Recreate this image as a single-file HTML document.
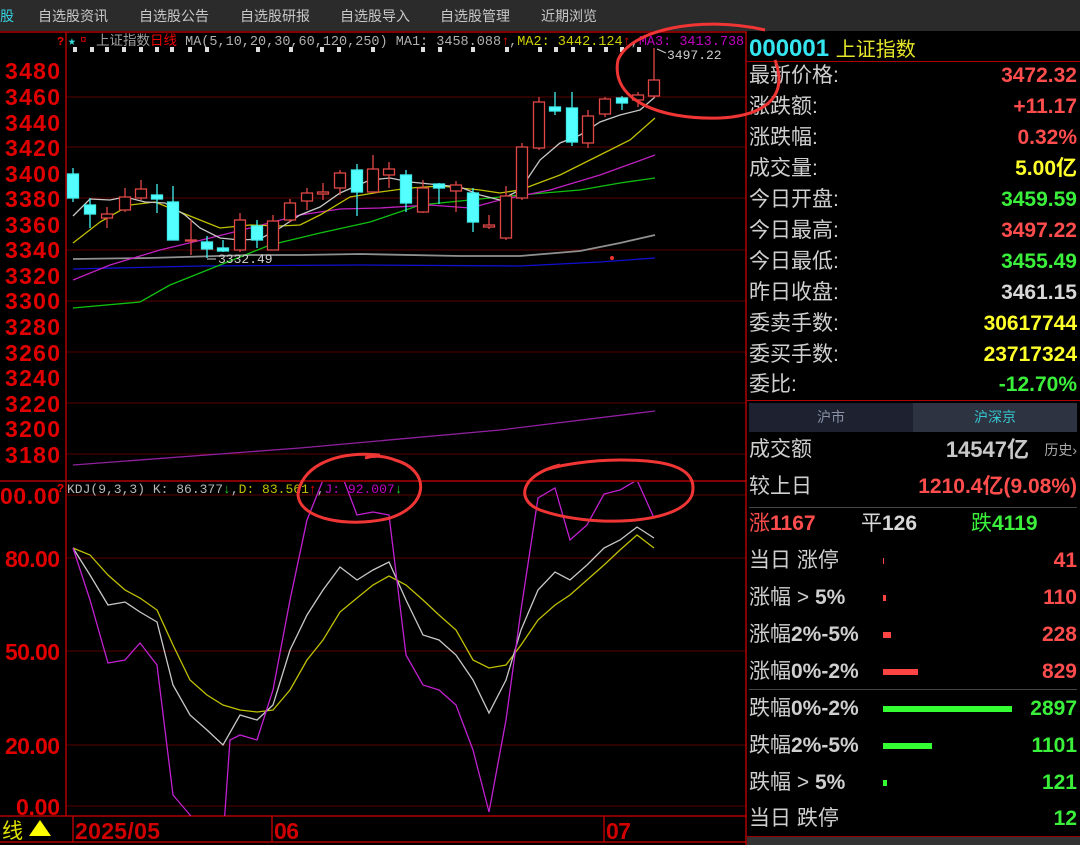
<!DOCTYPE html>
<html><head><meta charset="utf-8"><style>
html,body{margin:0;padding:0;background:#000;width:1080px;height:845px;overflow:hidden;font-family:"Liberation Sans","Noto Sans CJK SC",sans-serif}
#top{position:absolute;left:0;top:0;width:1080px;height:31px;background:#2b2b2b;color:#c8c8c8;font-size:14px}
#top span{position:absolute;top:6px}
#rp{position:absolute;left:747px;top:31px;width:333px;height:814px;background:#000;color:#cfcfcf}
.r{position:absolute;left:2px;width:328px;height:30px;font-size:21px;line-height:30px}
.r .v{position:absolute;right:0;top:0;font-weight:bold;font-size:21px}
.red{color:#ff4d4d}.grn{color:#3bf03b}.yel{color:#ffff2a}.wht{color:#d8d8d8}
.bar{position:absolute;left:134px;height:6px;top:12px}
</style></head><body>
<div id="top">
<span style="left:0;color:#35d0e0">股</span>
<span style="left:38px">自选股资讯</span>
<span style="left:139px">自选股公告</span>
<span style="left:240px">自选股研报</span>
<span style="left:340px">自选股导入</span>
<span style="left:440px">自选股管理</span>
<span style="left:541px">近期浏览</span>
</div>
<svg style="position:absolute;left:0;top:0" width="747" height="845" font-family="Liberation Mono, monospace">
<g stroke="#5a0000" stroke-width="1">
<line x1="66" y1="97" x2="747" y2="97"/><line x1="66" y1="147" x2="747" y2="147"/><line x1="66" y1="198" x2="747" y2="198"/><line x1="66" y1="250" x2="747" y2="250"/><line x1="66" y1="301" x2="747" y2="301"/><line x1="66" y1="352" x2="747" y2="352"/><line x1="66" y1="403" x2="747" y2="403"/><line x1="66" y1="454" x2="747" y2="454"/>
<line x1="66" y1="495" x2="747" y2="495"/><line x1="66" y1="558" x2="747" y2="558"/><line x1="66" y1="651" x2="747" y2="651"/><line x1="66" y1="745" x2="747" y2="745"/><line x1="66" y1="806" x2="747" y2="806"/>
</g>
<g stroke="#b00000" stroke-width="1.5">
<line x1="0" y1="32" x2="747" y2="32"/>
<line x1="66" y1="32" x2="66" y2="816"/>
<line x1="0" y1="481" x2="747" y2="481"/>
<line x1="0" y1="816" x2="747" y2="816"/><line x1="0" y1="842" x2="747" y2="842"/>
<line x1="746" y1="32" x2="746" y2="845"/>
<line x1="73" y1="816" x2="73" y2="842"/><line x1="272" y1="816" x2="272" y2="842"/><line x1="604" y1="816" x2="604" y2="842"/>
</g>
<g fill="#e00000" font-family="Liberation Sans, sans-serif" font-size="23" font-weight="bold" lengthAdjust="spacingAndGlyphs">
<text x="5" y="79" textLength="55">3480</text><text x="5" y="105" textLength="55">3460</text><text x="5" y="131" textLength="55">3440</text><text x="5" y="156" textLength="55">3420</text><text x="5" y="182" textLength="55">3400</text><text x="5" y="207" textLength="55">3380</text><text x="5" y="233" textLength="55">3360</text><text x="5" y="258" textLength="55">3340</text><text x="5" y="284" textLength="55">3320</text><text x="5" y="309" textLength="55">3300</text><text x="5" y="335" textLength="55">3280</text><text x="5" y="361" textLength="55">3260</text><text x="5" y="386" textLength="55">3240</text><text x="5" y="412" textLength="55">3220</text><text x="5" y="437" textLength="55">3200</text><text x="5" y="463" textLength="55">3180</text>
<text x="0" y="504" textLength="60">00.00</text><text x="5" y="567" textLength="55">80.00</text><text x="5" y="660" textLength="55">50.00</text><text x="5" y="754" textLength="55">20.00</text><text x="16" y="815" textLength="44">0.00</text>
</g>
<text x="57" y="45" fill="#e00" font-size="12" font-weight="bold">?</text>
<text x="68" y="45" fill="#35e0e0" font-size="13">★</text>
<text x="80" y="43" fill="#e00" font-size="11">¤</text>
<text x="96" y="45" font-size="13.5" font-family="Liberation Mono, Noto Sans CJK SC, monospace"><tspan fill="#a0a0a0">上证指数</tspan><tspan fill="#e00">日线</tspan><tspan fill="#b0b0b0"> MA(5,10,20,30,60,120,250) MA1: 3458.088</tspan><tspan fill="#e00">↑</tspan><tspan fill="#b0b0b0">,</tspan><tspan fill="#d0d000">MA2: 3442.124</tspan><tspan fill="#e00">↑</tspan><tspan fill="#b0b0b0">,</tspan><tspan fill="#c000c0">MA3: 3413.738</tspan><tspan fill="#e00">↑</tspan><tspan fill="#b0b0b0">,</tspan><tspan fill="#00c000">MA4</tspan></text>
<g fill="#ddd">
<rect x="73" y="47" width="4" height="5"/><rect x="90" y="47" width="4" height="5"/><rect x="105" y="47" width="4" height="5"/><rect x="122" y="47" width="4" height="5"/><rect x="139" y="47" width="4" height="5"/><rect x="155" y="47" width="4" height="5"/><rect x="170" y="47" width="4" height="5"/><rect x="188" y="47" width="4" height="5"/><rect x="205" y="47" width="4" height="5"/><rect x="256" y="47" width="4" height="5"/><rect x="289" y="47" width="4" height="5"/><rect x="320" y="47" width="4" height="5"/><rect x="337" y="47" width="4" height="5"/><rect x="371" y="47" width="4" height="5"/><rect x="421" y="47" width="4" height="5"/><rect x="438" y="47" width="4" height="5"/><rect x="471" y="47" width="4" height="5"/><rect x="505" y="47" width="4" height="5"/><rect x="538" y="47" width="4" height="5"/><rect x="554" y="47" width="4" height="5"/><rect x="571" y="47" width="4" height="5"/><rect x="588" y="47" width="4" height="5"/><rect x="604" y="47" width="4" height="5"/><rect x="620" y="47" width="4" height="5"/><rect x="637" y="47" width="4" height="5"/>
</g>
<g fill="none" stroke-width="1.3">
<polyline stroke="#9020a0" points="73,465 300,448 500,430 655,411"/>
<polyline stroke="#1010d0" points="73,269 200,266 360,265 520,266 600,262 655,258"/>
<polyline stroke="#909090" stroke-width="1.8" points="73,259 150,258 250,255 300,255 360,254 460,256 520,256 580,251 620,243 655,235"/>
<polyline stroke="#10c010" points="73,308 140,302 170,285 220,265 270,245 320,233 370,222 420,205 470,200 520,195 580,190 620,183 655,178"/>
<polyline stroke="#c020c0" points="73,280 110,265 160,250 210,238 250,228 300,215 340,209 380,208 430,205 470,208 500,200 550,190 600,175 655,155"/>
<polyline stroke="#c0c000" points="73,243 100,222 130,205 155,202 175,210 200,220 220,228 250,225 280,226 300,225 320,215 350,197 380,192 410,188 440,186 480,190 500,193 520,190 560,175 600,155 630,140 655,118"/>
<polyline stroke="#c8c8c8" points="73,216 90,199 110,200 125,197 145,202 165,203 185,215 200,228 220,238 240,240 260,239 280,228 300,215 320,207 340,193 370,180 390,178 410,182 440,185 460,187 480,195 500,200 520,190 540,160 560,143 580,135 600,122 620,115 640,110 655,97"/>
</g>
<g stroke-width="1.3">
<g stroke="#40f0f0" fill="#54ffff">
<line x1="73" y1="168" x2="73" y2="202"/><rect x="67.5" y="174" width="11" height="24"/>
<line x1="90" y1="198" x2="90" y2="228"/><rect x="84.5" y="205" width="11" height="9"/>
<line x1="157" y1="184" x2="157" y2="213"/><rect x="151.5" y="195" width="11" height="4"/>
<line x1="173" y1="186" x2="173" y2="240"/><rect x="167.5" y="202" width="11" height="38"/>
<line x1="207" y1="236" x2="207" y2="258"/><rect x="201.5" y="242" width="11" height="7"/>
<line x1="223" y1="240" x2="223" y2="252"/><rect x="217.5" y="248" width="11" height="3"/>
<line x1="257" y1="220" x2="257" y2="248"/><rect x="251.5" y="226" width="11" height="14"/>
<line x1="357" y1="164" x2="357" y2="216"/><rect x="351.5" y="170" width="11" height="22"/>
<line x1="406" y1="170" x2="406" y2="212"/><rect x="400.5" y="175" width="11" height="28"/>
<line x1="439" y1="183" x2="439" y2="204"/><rect x="433.5" y="184" width="11" height="4"/>
<line x1="473" y1="188" x2="473" y2="232"/><rect x="467.5" y="193" width="11" height="29"/>
<line x1="555" y1="92" x2="555" y2="115"/><rect x="549.5" y="107" width="11" height="4"/>
<line x1="572" y1="92" x2="572" y2="146"/><rect x="566.5" y="108" width="11" height="34"/>
<line x1="622" y1="96" x2="622" y2="110"/><rect x="616.5" y="98" width="11" height="5"/>
</g>
<g stroke="#e04848" fill="none">
<line x1="107" y1="207" x2="107" y2="228"/><rect x="101.5" y="214" width="11" height="4" fill="#000"/>
<line x1="125" y1="188" x2="125" y2="212"/><rect x="119.5" y="197" width="11" height="13" fill="#000"/>
<line x1="141" y1="180" x2="141" y2="200"/><rect x="135.5" y="189" width="11" height="9" fill="#000"/>
<line x1="191" y1="220" x2="191" y2="255"/><rect x="185.5" y="240" width="11" height="1" fill="#000"/>
<line x1="240" y1="213" x2="240" y2="252"/><rect x="234.5" y="220" width="11" height="30" fill="#000"/>
<line x1="273" y1="215" x2="273" y2="250"/><rect x="267.5" y="221" width="11" height="29" fill="#000"/>
<line x1="290" y1="199" x2="290" y2="222"/><rect x="284.5" y="203" width="11" height="17" fill="#000"/>
<line x1="307" y1="188" x2="307" y2="210"/><rect x="301.5" y="193" width="11" height="8" fill="#000"/>
<line x1="323" y1="183" x2="323" y2="200"/><rect x="317.5" y="192" width="11" height="2" fill="#000"/>
<line x1="340" y1="170" x2="340" y2="195"/><rect x="334.5" y="173" width="11" height="15" fill="#000"/>
<line x1="373" y1="155" x2="373" y2="193"/><rect x="367.5" y="169" width="11" height="23" fill="#000"/>
<line x1="389" y1="162" x2="389" y2="188"/><rect x="383.5" y="169" width="11" height="6" fill="#000"/>
<line x1="423" y1="180" x2="423" y2="213"/><rect x="417.5" y="188" width="11" height="24" fill="#000"/>
<line x1="456" y1="181" x2="456" y2="212"/><rect x="450.5" y="185" width="11" height="6" fill="#000"/>
<line x1="489" y1="215" x2="489" y2="229"/><rect x="483.5" y="225" width="11" height="2" fill="#000"/>
<line x1="506" y1="186" x2="506" y2="240"/><rect x="500.5" y="196" width="11" height="42" fill="#000"/>
<line x1="522" y1="143" x2="522" y2="200"/><rect x="516.5" y="147" width="11" height="51" fill="#000"/>
<line x1="539" y1="97" x2="539" y2="150"/><rect x="533.5" y="102" width="11" height="46" fill="#000"/>
<line x1="588" y1="110" x2="588" y2="148"/><rect x="582.5" y="116" width="11" height="27" fill="#000"/>
<line x1="605" y1="97" x2="605" y2="117"/><rect x="599.5" y="99" width="11" height="15" fill="#000"/>
<line x1="638" y1="92" x2="638" y2="107"/><rect x="632.5" y="95" width="11" height="5" fill="#000"/>
<line x1="654" y1="48" x2="654" y2="98"/><rect x="648.5" y="80" width="11" height="16" fill="#000"/>
</g>
</g>
<circle cx="612" cy="258" r="2" fill="#e33"/>
<line x1="657" y1="49" x2="666" y2="53" stroke="#ccc"/>
<text x="667" y="59" fill="#d0d0d0" font-size="13">3497.22</text>
<line x1="207" y1="259" x2="216" y2="259" stroke="#ccc"/>
<text x="218" y="263" fill="#d0d0d0" font-size="13">3332.49</text>
<text x="57" y="492" fill="#e00" font-size="12" font-weight="bold">?</text>
<text x="67" y="493" font-size="13"><tspan fill="#b8b8b8">KDJ(9,3,3) K: 86.377</tspan><tspan fill="#2c2">↓</tspan><tspan fill="#b8b8b8">,</tspan><tspan fill="#c0c000">D: 83.561</tspan><tspan fill="#e00">↑</tspan><tspan fill="#b8b8b8">,</tspan><tspan fill="#c000c0">J: 92.007</tspan><tspan fill="#2c2">↓</tspan></text>
<svg x="66" y="482" width="680" height="334" overflow="hidden">
<g transform="translate(-66,-482)" fill="none" stroke-width="1.3">
<polyline stroke="#c0c000" points="73,548 90,555 108,575 125,590 140,598 157,610 173,645 190,680 207,695 223,705 240,710 257,712 273,710 290,690 307,660 323,640 340,612 357,598 373,585 389,576 406,585 423,600 439,615 456,630 473,660 489,668 506,665 521,645 538,620 555,605 570,595 587,580 604,565 620,550 637,535 654,548"/>
<polyline stroke="#c8c8c8" points="73,548 90,575 108,605 125,602 140,612 157,622 173,685 190,715 207,730 223,745 240,715 257,720 273,705 290,650 307,615 323,590 340,567 357,580 373,570 389,562 406,600 423,635 439,640 456,655 473,680 489,713 506,680 521,630 538,590 555,572 570,580 587,565 604,548 620,540 637,527 654,538"/>
<polyline stroke="#c020d0" points="73,548 90,600 108,663 125,660 140,643 157,665 173,795 190,815 207,840 223,840 230,740 240,735 257,740 273,690 290,600 307,520 323,480 340,470 357,515 373,512 389,515 406,655 423,685 439,690 456,705 473,750 489,812 506,720 521,610 538,498 555,488 570,540 587,525 604,494 620,490 637,480 654,518"/>
</g></svg>
<text x="2" y="838" fill="#e0e000" font-size="21" font-family="Liberation Sans, Noto Sans CJK SC, sans-serif">线</text>
<polygon points="40,820 51,836 29,836" fill="#ffff00"/>
<g fill="#d00000" font-family="Liberation Sans, sans-serif" font-size="23" font-weight="bold" lengthAdjust="spacingAndGlyphs">
<text x="75" y="839" textLength="85">2025/05</text>
<text x="274" y="839" textLength="25">06</text><text x="606" y="839" textLength="25">07</text>
</g>
</svg>
<div id="rp">
<div style="position:absolute;left:2px;top:2px;font-size:24px;font-weight:bold;color:#35e5f0">000001 <span style="font-size:20px;font-weight:normal;color:#e6e62a">上证指数</span></div>
<div style="position:absolute;left:0;top:30px;width:333px;height:1px;background:#b00000"></div>
<div class="r" style="top:30px">最新价格:<span class="v red">3472.32</span></div>
<div class="r" style="top:61px">涨跌额:<span class="v red">+11.17</span></div>
<div class="r" style="top:92px">涨跌幅:<span class="v red">0.32%</span></div>
<div class="r" style="top:123px">成交量:<span class="v yel">5.00亿</span></div>
<div class="r" style="top:154px">今日开盘:<span class="v grn">3459.59</span></div>
<div class="r" style="top:185px">今日最高:<span class="v red">3497.22</span></div>
<div class="r" style="top:216px">今日最低:<span class="v grn">3455.49</span></div>
<div class="r" style="top:247px">昨日收盘:<span class="v wht">3461.15</span></div>
<div class="r" style="top:278px">委卖手数:<span class="v yel">30617744</span></div>
<div class="r" style="top:309px">委买手数:<span class="v yel">23717324</span></div>
<div class="r" style="top:339px">委比:<span class="v grn">-12.70%</span></div>
<div style="position:absolute;left:0;top:369px;width:333px;height:1px;background:#b00000"></div>
<div style="position:absolute;left:2px;top:372px;width:164px;height:29px;background:#1d2130;color:#8a93a8;font-size:14px;text-align:center;line-height:29px">沪市</div>
<div style="position:absolute;left:166px;top:372px;width:164px;height:29px;background:#2e3342;color:#35c8d0;font-size:14px;text-align:center;line-height:29px">沪深京</div>
<div class="r" style="top:404px">成交额<span style="position:absolute;right:48px;font-weight:bold;font-size:22px;color:#c8c8c8">14547亿</span><span style="position:absolute;right:0;font-size:14px;color:#aaa">历史›</span></div>
<div class="r" style="top:441px">较上日<span class="v red">1210.4亿(9.08%)</span></div>
<div style="position:absolute;left:2px;top:476px;width:328px;height:1px;background:#444"></div>
<div class="r" style="top:478px"><span class="red">涨<b>1167</b></span><span style="position:absolute;left:112px" class="wht">平<b>126</b></span><span style="position:absolute;left:222px" class="grn">跌<b>4119</b></span></div>
<div class="r" style="top:515px">当日 涨停<div class="bar" style="width:1px;background:#f44"></div><span class="v red">41</span></div>
<div class="r" style="top:552px">涨幅 &gt; <b>5%</b><div class="bar" style="width:3px;background:#f44"></div><span class="v red">110</span></div>
<div class="r" style="top:589px">涨幅<b>2%-5%</b><div class="bar" style="width:8px;background:#f44"></div><span class="v red">228</span></div>
<div class="r" style="top:626px">涨幅<b>0%-2%</b><div class="bar" style="width:35px;background:#f44"></div><span class="v red">829</span></div>
<div style="position:absolute;left:2px;top:658px;width:328px;height:1px;background:#444"></div>
<div class="r" style="top:663px">跌幅<b>0%-2%</b><div class="bar" style="width:129px;background:#3f3"></div><span class="v grn">2897</span></div>
<div class="r" style="top:700px">跌幅<b>2%-5%</b><div class="bar" style="width:49px;background:#3f3"></div><span class="v grn">1101</span></div>
<div class="r" style="top:737px">跌幅 &gt; <b>5%</b><div class="bar" style="width:4px;background:#3f3"></div><span class="v grn">121</span></div>
<div class="r" style="top:773px">当日 跌停<span class="v grn">12</span></div>
<div style="position:absolute;left:0;top:805px;width:333px;height:1px;background:#900"></div>
<div style="position:absolute;left:0;top:806px;width:333px;height:8px;background:#333"></div>
</div>
<svg style="position:absolute;left:0;top:0;pointer-events:none" width="1080" height="845">
<g fill="none" stroke="#f03535" stroke-width="3">
<path d="M765,30 C700,15 630,30 618,60 C610,100 660,120 720,118 C760,116 790,100 775,60"/>
<path d="M380,455 C330,450 300,470 298,495 C300,520 350,528 390,518 C430,505 430,470 395,460 C385,456 375,455 365,458"/>
<path d="M560,465 C520,475 515,500 540,510 C590,528 680,525 692,495 C700,465 660,460 620,460 C590,460 560,465 545,470"/>
</g>
</svg>
</body></html>
